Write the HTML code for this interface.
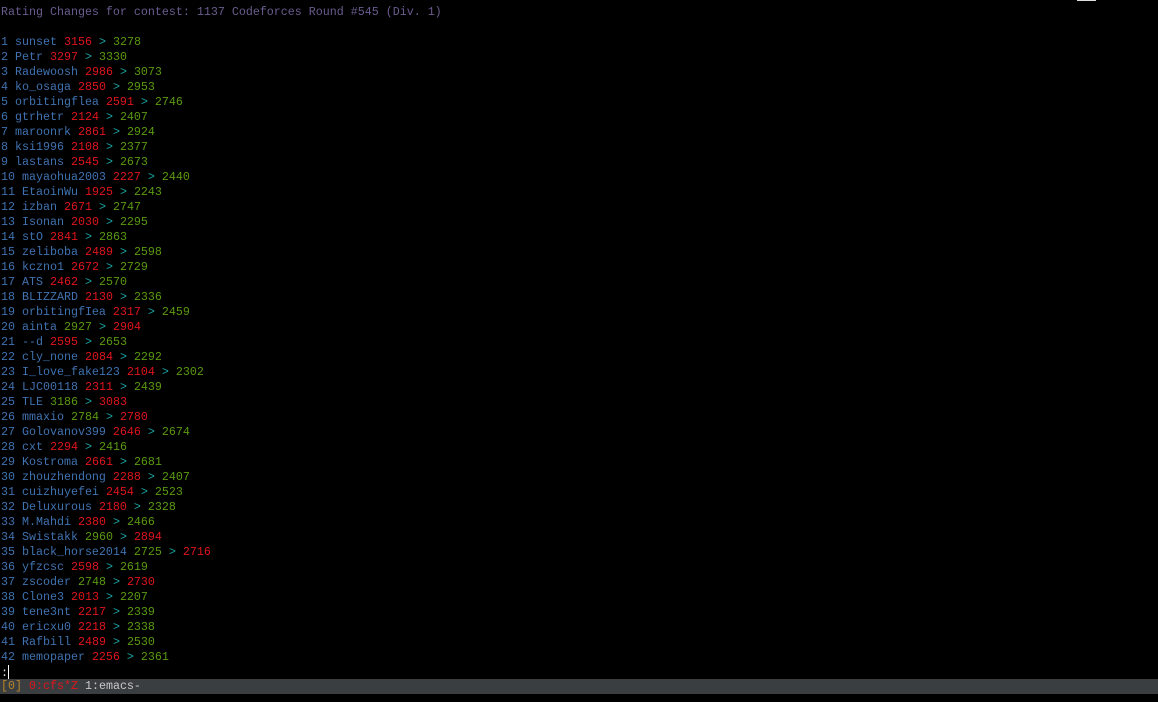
<!DOCTYPE html>
<html><head><meta charset="utf-8"><style>
html,body{margin:0;padding:0;background:#000;width:1158px;height:702px;overflow:hidden}
pre{margin:0;position:absolute;left:1px;top:5px;font-family:"Liberation Mono",monospace;font-size:11.67px;line-height:15px;color:#3f72b0;white-space:pre}
.t{color:#6a5c8e}.r{color:#e0141c}.g{color:#5a9a10}.c{color:#1aa4a4}
.bar{position:absolute;left:0;top:679px;width:1158px;height:15px;background:#3a3e40}
.bar pre{top:0;left:1px;color:#c8c8c8}
.o{color:#b8862a}
.cur{display:inline-block;width:1px;height:14px;background:#fff;vertical-align:-3px}
.topl{position:absolute;left:1077px;top:0;width:19px;height:1px;background:#ddd}
</style></head><body>
<div class="topl"></div>
<pre id="p"></pre>
<div class="bar"><pre><span class="o">[0]</span> <span class="r">0:cfs*Z</span> 1:emacs-</pre></div>
<script>
var d=[["sunset",3156,3278],["Petr",3297,3330],["Radewoosh",2986,3073],["ko_osaga",2850,2953],["orbitingflea",2591,2746],["gtrhetr",2124,2407],["maroonrk",2861,2924],["ksi1996",2108,2377],["lastans",2545,2673],["mayaohua2003",2227,2440],["EtaoinWu",1925,2243],["izban",2671,2747],["Isonan",2030,2295],["stO",2841,2863],["zeliboba",2489,2598],["kczno1",2672,2729],["ATS",2462,2570],["BLIZZARD",2130,2336],["orbitingfIea",2317,2459],["ainta",2927,2904],["--d",2595,2653],["cly_none",2084,2292],["I_love_fake123",2104,2302],["LJC00118",2311,2439],["TLE",3186,3083],["mmaxio",2784,2780],["Golovanov399",2646,2674],["cxt",2294,2416],["Kostroma",2661,2681],["zhouzhendong",2288,2407],["cuizhuyefei",2454,2523],["Deluxurous",2180,2328],["M.Mahdi",2380,2466],["Swistakk",2960,2894],["black_horse2014",2725,2716],["yfzcsc",2598,2619],["zscoder",2748,2730],["Clone3",2013,2207],["tene3nt",2217,2339],["ericxu0",2218,2338],["Rafbill",2489,2530],["memopaper",2256,2361]];
var h='<span class="t">Rating Changes for contest: 1137 Codeforces Round #545 (Div. 1)</span>\n\n';
d.forEach(function(x,i){var a=x[1]<x[2]?'r':'g',b=x[1]<x[2]?'g':'r';
h+=(i+1)+' '+x[0]+' <span class="'+a+'">'+x[1]+'</span> <span class="c">&gt;</span> <span class="'+b+'">'+x[2]+'</span>\n';});
h+='<span style="color:#ddd">:</span><span class="cur"></span>';
document.getElementById('p').innerHTML=h;
</script>
</body></html>
